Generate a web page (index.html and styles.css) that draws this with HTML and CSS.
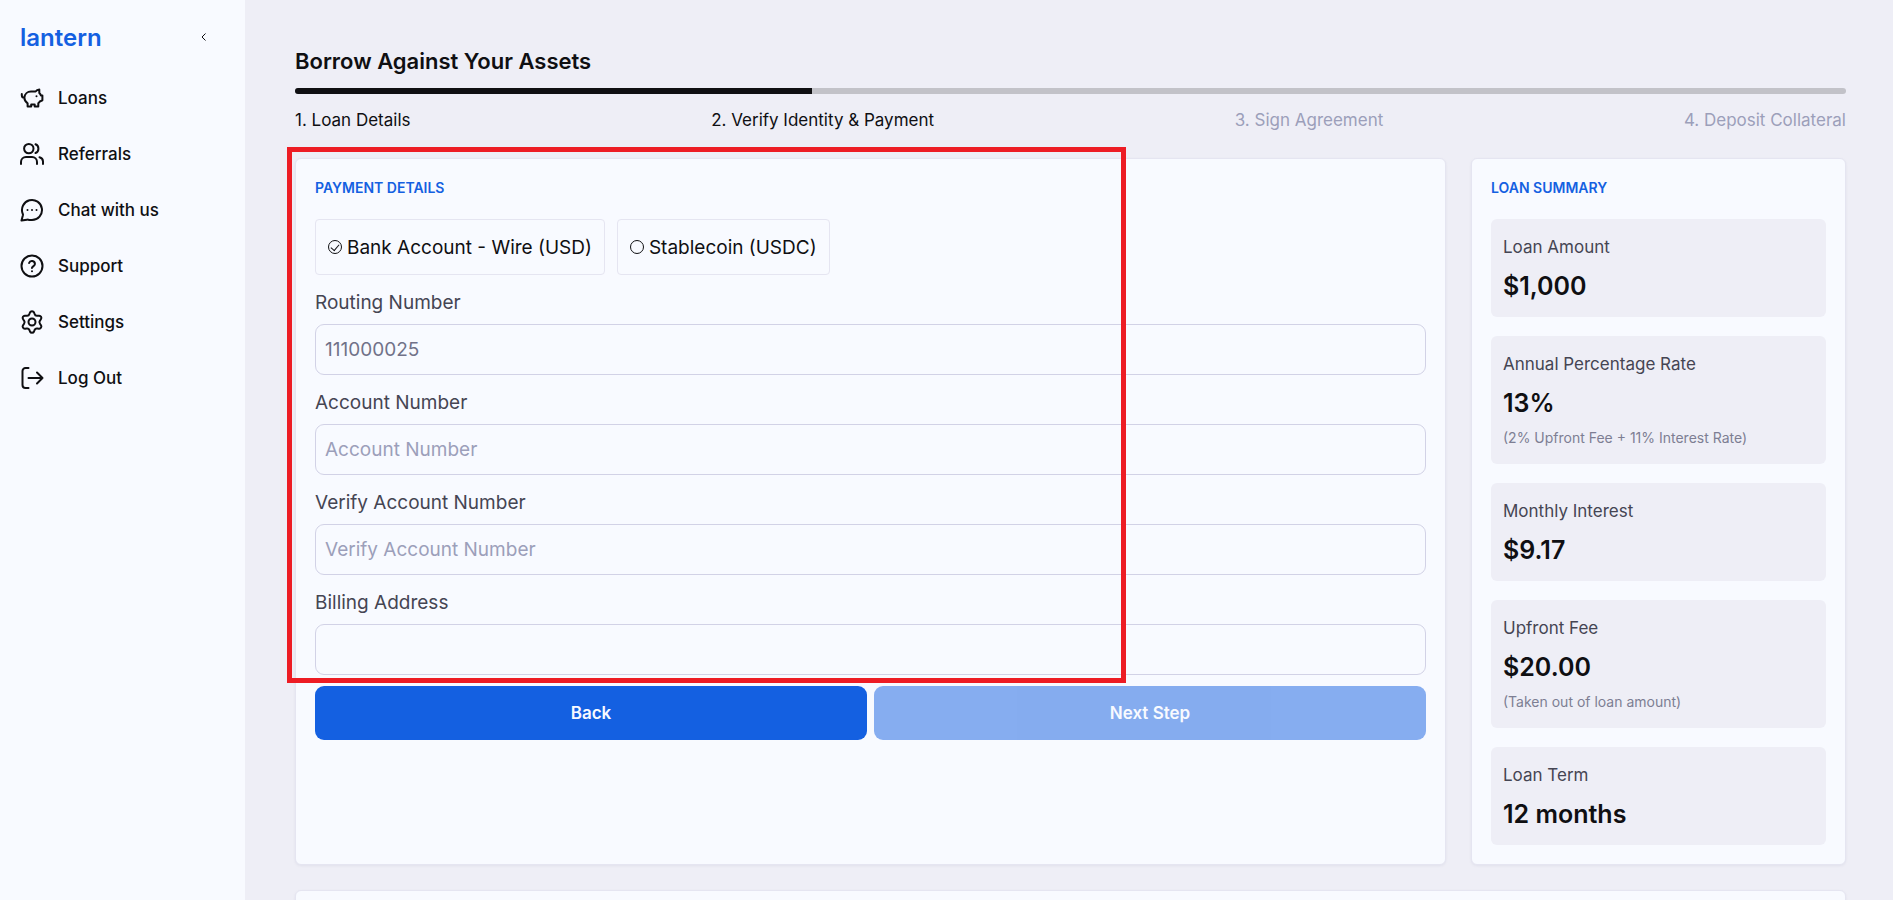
FILE: index.html
```html
<!DOCTYPE html>
<html lang="en">
<head>
  <meta charset="UTF-8">
  <meta name="viewport" content="width=device-width, initial-scale=1.0">
  <title>Lantern - Borrow</title>
  <link rel="stylesheet" href="styles.css">
</head>
<body>
  <div class="app">
    <aside class="sidebar">
      <div class="sidebar-header">
        <a class="logo" href="#">lantern</a>
        <button class="collapse" type="button" aria-label="Collapse menu">
          <svg viewBox="0 0 8 10" width="8" height="10"><path d="M5.5 1.5L2 5l3.5 3.5"/></svg>
        </button>
      </div>
      <nav class="nav">
        <a href="#">
          <svg viewBox="0 0 24 24"><path d="M1.8 8v1.2a2.6 2.6 0 0 0 2.6 2.6M4.4 11.8C4.6 8 7.6 5.6 11 5.6h4.6c.8-1.3 2-2.1 3.7-2.1v3.6c.8.7 1.3 1.4 1.6 2.3h1.5v4.9l-2.6 1.2c-.4.7-.9 1.2-1.5 1.7v3.3h-3.6v-1.9h-3.5v1.9H7.6v-3.2c-2-1.3-3.2-3.1-3.2-5.5z"/><path d="M16.5 10.2h.01"/></svg>
          Loans
        </a>
        <a href="#">
          <svg viewBox="0 0 24 24"><path d="M23 22v-2.500a4.500 4.500 0 0 0-3.500-4.300M15.500 2.300a4.700 4.700 0 0 1 0 8.700M17 22v-2a5 5 0 0 0-5-5H6a5 5 0 0 0-5 5v2M13.500 6.600a4.700 4.700 0 1 1-9.400 0 4.700 4.700 0 0 1 9.400 0z"/></svg>
          Referrals
        </a>
        <a href="#">
          <svg viewBox="0 0 24 24"><path d="M12 22a10 10 0 1 0-9.270-6.220c.11.280.17.420.2.540.03.110.04.200.04.310 0 .120-.02.250-.07.500L1.500 22.600l5.370-.93c.25-.04.370-.07.480-.07.110 0 .200.010.310.040.120.030.260.090.540.200A10 10 0 0 0 12 22z"/><path d="M7.500 12h.01M12 12h.01M16.500 12h.01"/></svg>
          Chat with us
        </a>
        <a href="#">
          <svg viewBox="0 0 24 24"><circle cx="12" cy="12" r="10.5"/><path d="M9.1 9a3 3 0 0 1 5.83 1c0 2-3 2.6-3 4M12 17.2h.01"/></svg>
          Support
        </a>
        <a href="#">
          <svg viewBox="0 0 24 24"><circle cx="12" cy="12" r="3.5"/><path d="M9.4 20l.58 1.500a2.200 2.200 0 0 0 4.040 0l.58-1.500a2.500 2.500 0 0 1 2.600-1.500l1.700.18a2.200 2.200 0 0 0 2.020-3.500l-1-1.500a2.500 2.500 0 0 1 0-3.000l1-1.500a2.200 2.200 0 0 0-2.020-3.500l-1.700.18A2.500 2.500 0 0 1 14.600 4l-.58-1.500a2.200 2.200 0 0 0-4.040 0L9.400 4a2.500 2.500 0 0 1-2.600 1.860l-1.700-.18a2.200 2.200 0 0 0-2.020 3.500l1 1.500a2.500 2.500 0 0 1 0 3l-1 1.500a2.200 2.200 0 0 0 2.020 3.500l1.700-.18A2.500 2.500 0 0 1 9.400 20z"/></svg>
          Settings
        </a>
        <a href="#">
          <svg viewBox="0 0 24 24"><path d="M8.5 2H5.5A3 3 0 0 0 2.5 5v14a3 3 0 0 0 3 3h3M8.500 12h14M17 6.500l5.500 5.500-5.500 5.500"/></svg>
          Log Out
        </a>
      </nav>
    </aside>

    <main class="content">
      <h1>Borrow Against Your Assets</h1>
      <div class="progress"><div class="progress-bar"></div></div>
      <ol class="steps">
        <li class="done">1. Loan Details</li>
        <li class="done">2. Verify Identity &amp; Payment</li>
        <li>3. Sign Agreement</li>
        <li>4. Deposit Collateral</li>
      </ol>

      <div class="columns">
        <form class="card payment">
          <h2>Payment Details</h2>
          <div class="options">
            <label class="option"><input type="radio" name="method" checked> Bank Account - Wire (USD)</label>
            <label class="option"><input type="radio" name="method"> Stablecoin (USDC)</label>
          </div>
          <div class="field">
            <label for="routing">Routing Number</label>
            <input id="routing" type="text" value="111000025">
          </div>
          <div class="field">
            <label for="account">Account Number</label>
            <input id="account" type="text" placeholder="Account Number">
          </div>
          <div class="field">
            <label for="verify">Verify Account Number</label>
            <input id="verify" type="text" placeholder="Verify Account Number">
          </div>
          <div class="field">
            <label for="billing">Billing Address</label>
            <input id="billing" type="text">
          </div>
          <div class="actions">
            <button type="button">Back</button>
            <button type="submit" disabled>Next Step</button>
          </div>
          <div class="highlight"></div>
        </form>

        <section class="card summary">
          <h2>Loan Summary</h2>
          <div class="summary-item">
            <p class="name">Loan Amount</p>
            <p class="value">$1,000</p>
          </div>
          <div class="summary-item">
            <p class="name">Annual Percentage Rate</p>
            <p class="value">13%</p>
            <p class="note">(2% Upfront Fee + 11% Interest Rate)</p>
          </div>
          <div class="summary-item">
            <p class="name">Monthly Interest</p>
            <p class="value">$9.17</p>
          </div>
          <div class="summary-item">
            <p class="name">Upfront Fee</p>
            <p class="value">$20.00</p>
            <p class="note">(Taken out of loan amount)</p>
          </div>
          <div class="summary-item">
            <p class="name">Loan Term</p>
            <p class="value">12 months</p>
          </div>
        </section>
      </div>

      <section class="card next-card"></section>
    </main>
  </div>
</body>
</html>
```

FILE: styles.css
```css
:root {
  --primary: #1460e1;
  --text: #0f0f12;
  --text-soft: #454553;
  --muted: #9c9fba;
  --page: #eeeef6;
  --panel: #f8faff;
  --border: #e5e5f1;
  --input-border: #d2d2e6;
}

* {
  box-sizing: border-box;
}

body {
  margin: 0;
  height: 100vh;
  overflow: hidden;
  background: var(--page);
  color: var(--text);
  font-family: Inter, "Liberation Sans", sans-serif;
  font-size: 17px;
}

h1, h2, p, ol {
  margin: 0;
  padding: 0;
}

.app {
  display: flex;
  height: 100vh;
}

/* Sidebar */
.sidebar {
  flex: 0 0 245px;
  background: var(--panel);
}

.sidebar-header {
  display: flex;
  align-items: center;
  justify-content: space-between;
  height: 70px;
  padding: 4px 36px 0 20px;
}

.logo {
  color: var(--primary);
  font-size: 24px;
  font-weight: 600;
  text-decoration: none;
}

.collapse {
  display: flex;
  padding: 1px;
  border: 0;
  background: none;
}

.collapse svg {
  fill: none;
  stroke: var(--text);
}

.nav a {
  display: flex;
  align-items: center;
  gap: 14px;
  height: 56px;
  padding-left: 20px;
  color: var(--text);
  font-weight: 500;
  text-decoration: none;
}

.nav svg {
  width: 24px;
  height: 24px;
  fill: none;
  stroke: var(--text);
  stroke-width: 2;
  stroke-linecap: round;
  stroke-linejoin: round;
}

/* Main area */
.content {
  flex: 1;
  padding: 44px 47px 0 50px;
  overflow: hidden;
}

h1 {
  font-size: 22px;
  font-weight: 600;
  line-height: 34px;
}

.progress {
  height: 6px;
  margin-top: 10px;
  border-radius: 3px;
  background: #c2c2c8;
  overflow: hidden;
}

.progress-bar {
  width: 33.33%;
  height: 100%;
  background: var(--text);
}

.steps {
  display: flex;
  justify-content: space-between;
  margin-top: 12px;
  color: var(--muted);
  line-height: 28px;
  list-style: none;
}

.steps .done {
  color: var(--text);
}

.columns {
  display: grid;
  grid-template-columns: minmax(0, 1fr) 375px;
  gap: 25px;
  margin-top: 24px;
}

.card {
  border: 1px solid var(--border);
  border-radius: 6px;
  background: var(--panel);
  box-shadow: 0 1px 3px rgba(20, 20, 60, 0.06);
}

.payment,
.summary {
  padding: 17px 19px 19px;
}

h2 {
  margin-bottom: 19px;
  color: var(--primary);
  font-size: 14px;
  font-weight: 600;
  line-height: 24px;
  text-transform: uppercase;
}

/* Payment form */
.payment {
  position: relative;
}

.options {
  display: flex;
  gap: 12px;
}

.option {
  display: flex;
  align-items: center;
  gap: 5px;
  height: 56px;
  padding: 0 12px;
  border: 1px solid var(--border);
  border-radius: 4px;
  font-size: 19px;
}

.option input {
  appearance: none;
  width: 14px;
  height: 14px;
  margin: 0;
  border: 1px solid var(--text);
  border-radius: 50%;
}

.option input:checked {
  display: grid;
  place-items: center;
}

.option input:checked::before {
  content: "";
  width: 7px;
  height: 4px;
  margin-bottom: 2px;
  border: solid var(--text);
  border-width: 0 0 1px 1px;
  transform: rotate(-50deg);
}

.field {
  margin-top: 13px;
}

.field label {
  display: block;
  margin-bottom: 6px;
  color: var(--text-soft);
  font-size: 19px;
  line-height: 30px;
}

.field input {
  display: block;
  width: 100%;
  height: 51px;
  padding: 0 9px;
  border: 1px solid var(--input-border);
  border-radius: 9px;
  background: transparent;
  color: #717289;
  font: inherit;
  font-size: 19px;
}

.field input::placeholder {
  color: var(--muted);
}

.actions {
  display: grid;
  grid-template-columns: 1fr 1fr;
  gap: 7px;
  margin-top: 11px;
}

.actions button {
  height: 54px;
  border: 0;
  border-radius: 9px;
  background: var(--primary);
  color: var(--panel);
  font: inherit;
  font-weight: 600;
}

.actions button:disabled {
  opacity: 0.5;
}

/* Red frame drawn over the form */
.highlight {
  position: absolute;
  top: -12px;
  left: -9px;
  width: 73%;
  height: 536px;
  border: 5px solid #ed1c24;
  pointer-events: none;
}

/* Loan summary */
.summary-item {
  padding: 13px 12px;
  border-radius: 6px;
  background: var(--page);
}

.summary-item + .summary-item {
  margin-top: 19px;
}

.name {
  margin-bottom: 6px;
  color: var(--text-soft);
  line-height: 30px;
}

.value {
  font-size: 25px;
  font-weight: 600;
  line-height: 36px;
}

.note {
  margin-top: 4px;
  color: #7d7e93;
  font-size: 14px;
  line-height: 26px;
}

.next-card {
  height: 200px;
  margin-top: 25px;
}
```
